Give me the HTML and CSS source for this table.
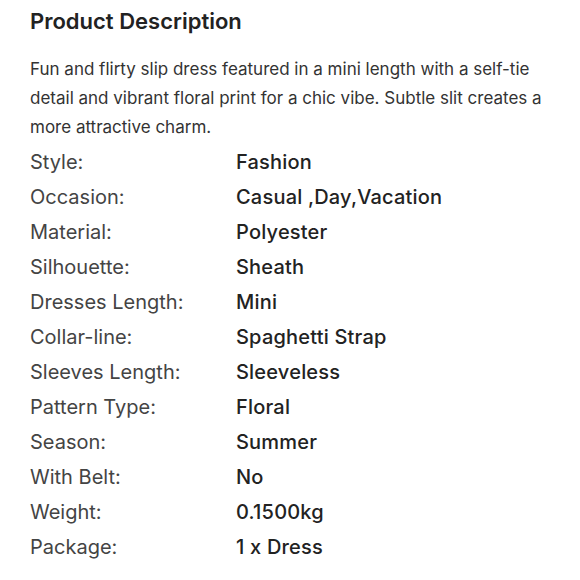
FILE: index.html
```html
<!DOCTYPE html>
<html>
<head>
<meta charset="utf-8">
<link rel="stylesheet" href="styles.css">
</head>
<body>
<section class="desc">
  <h2 class="title">Product Description</h2>
  <p class="text">Fun and flirty slip dress featured in a mini length with a self-tie detail and vibrant floral print for a chic vibe. Subtle slit creates a more attractive charm.</p>
  <dl class="specs">
    <div class="row"><dt>Style:</dt><dd>Fashion</dd></div>
    <div class="row"><dt>Occasion:</dt><dd>Casual ,Day,Vacation</dd></div>
    <div class="row"><dt>Material:</dt><dd>Polyester</dd></div>
    <div class="row"><dt>Silhouette:</dt><dd>Sheath</dd></div>
    <div class="row"><dt>Dresses Length:</dt><dd>Mini</dd></div>
    <div class="row"><dt>Collar-line:</dt><dd>Spaghetti Strap</dd></div>
    <div class="row"><dt>Sleeves Length:</dt><dd>Sleeveless</dd></div>
    <div class="row"><dt>Pattern Type:</dt><dd>Floral</dd></div>
    <div class="row"><dt>Season:</dt><dd>Summer</dd></div>
    <div class="row"><dt>With Belt:</dt><dd>No</dd></div>
    <div class="row"><dt>Weight:</dt><dd>0.1500kg</dd></div>
    <div class="row"><dt>Package:</dt><dd>1 x Dress</dd></div>
  </dl>
</section>
</body>
</html>
```
FILE: styles.css
```css
html, body {
  margin: 0;
  padding: 0;
  background: #fff;
}
body {
  font-family: "Inter", "Open Sans", sans-serif;
  color: #222;
}
.desc {
  padding: 6px 30px 0 30px;
}
.title {
  margin: 0;
  font-size: 22px;
  font-weight: 600;
  line-height: 30px;
  color: #222;
  letter-spacing: 0;
}
.text {
  margin: 19px 0 0 0;
  font-size: 17px;
  line-height: 29px;
  color: #333;
  letter-spacing: 0;
}
.specs {
  margin: 2px 0 0 0;
}
.row {
  display: grid;
  grid-template-columns: 206px 1fr;
  height: 35px;
  align-items: center;
}
.row dt {
  font-size: 20px;
  color: #444;
  font-weight: 400;
}
.row dd {
  margin: 0;
  font-size: 20px;
  color: #222;
  font-weight: 500;
  letter-spacing: 0.2px;
}
```
